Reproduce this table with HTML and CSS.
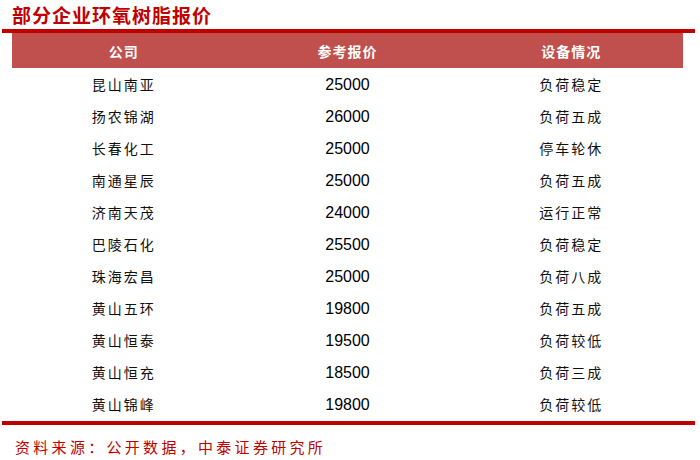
FILE: index.html
```html
<!DOCTYPE html>
<html lang="zh">
<head>
<meta charset="utf-8">
<link rel="stylesheet" href="styles.css">
</head>
<body>
<div class="page">
  <h1 class="title">部分企业环氧树脂报价</h1>
  <div class="rule"></div>
  <div class="table">
    <div class="row head">
      <div class="cell">公司</div>
      <div class="cell">参考报价</div>
      <div class="cell">设备情况</div>
    </div>
    <div class="row"><div class="cell cn">昆山南亚</div><div class="cell num">25000</div><div class="cell cn">负荷稳定</div></div>
    <div class="row"><div class="cell cn">扬农锦湖</div><div class="cell num">26000</div><div class="cell cn">负荷五成</div></div>
    <div class="row"><div class="cell cn">长春化工</div><div class="cell num">25000</div><div class="cell cn">停车轮休</div></div>
    <div class="row"><div class="cell cn">南通星辰</div><div class="cell num">25000</div><div class="cell cn">负荷五成</div></div>
    <div class="row"><div class="cell cn">济南天茂</div><div class="cell num">24000</div><div class="cell cn">运行正常</div></div>
    <div class="row"><div class="cell cn">巴陵石化</div><div class="cell num">25500</div><div class="cell cn">负荷稳定</div></div>
    <div class="row"><div class="cell cn">珠海宏昌</div><div class="cell num">25000</div><div class="cell cn">负荷八成</div></div>
    <div class="row"><div class="cell cn">黄山五环</div><div class="cell num">19800</div><div class="cell cn">负荷五成</div></div>
    <div class="row"><div class="cell cn">黄山恒泰</div><div class="cell num">19500</div><div class="cell cn">负荷较低</div></div>
    <div class="row"><div class="cell cn">黄山恒充</div><div class="cell num">18500</div><div class="cell cn">负荷三成</div></div>
    <div class="row"><div class="cell cn">黄山锦峰</div><div class="cell num">19800</div><div class="cell cn">负荷较低</div></div>
  </div>
  <div class="rule bottom"></div>
  <p class="source">资料来源：公开数据，中泰证券研究所</p>
</div>
</body>
</html>
```

FILE: styles.css
```css
html, body {
  margin: 0;
  padding: 0;
  background: #ffffff;
}

.page {
  width: 700px;
  height: 460px;
  font-family: "Noto Sans CJK SC", "Liberation Sans", sans-serif;
}

.title {
  margin: 0;
  height: 29px;
  padding-left: 12px;
  font-size: 19px;
  line-height: 29px;
  font-weight: 700;
  letter-spacing: 1px;
  color: #c00000;
}

.rule {
  margin-left: 2px;
  width: 693px;
  height: 4px;
  background: #c00000;
}

.rule.bottom {
  margin-top: 1px;
}

.table {
  margin-left: 12px;
  width: 671px;
}

.row {
  display: grid;
  grid-template-columns: 1fr 1fr 1fr;
  height: 32px;
  align-items: center;
}

.row.head {
  height: 35px;
  background: #c0504d;
  color: #ffffff;
  font-size: 14px;
  font-weight: 700;
  letter-spacing: 1px;
}

.cell {
  text-align: center;
}

.cn {
  font-size: 14px;
  letter-spacing: 2px;
  color: #111111;
}

.num {
  font-family: "Liberation Sans", Arial, sans-serif;
  font-size: 16px;
  line-height: 20px;
  padding-top: 1px;
  color: #000000;
}

.source {
  margin: 0;
  padding: 11px 0 0 15px;
  font-size: 15px;
  line-height: 22px;
  letter-spacing: 3.3px;
  color: #c00000;
}
```
